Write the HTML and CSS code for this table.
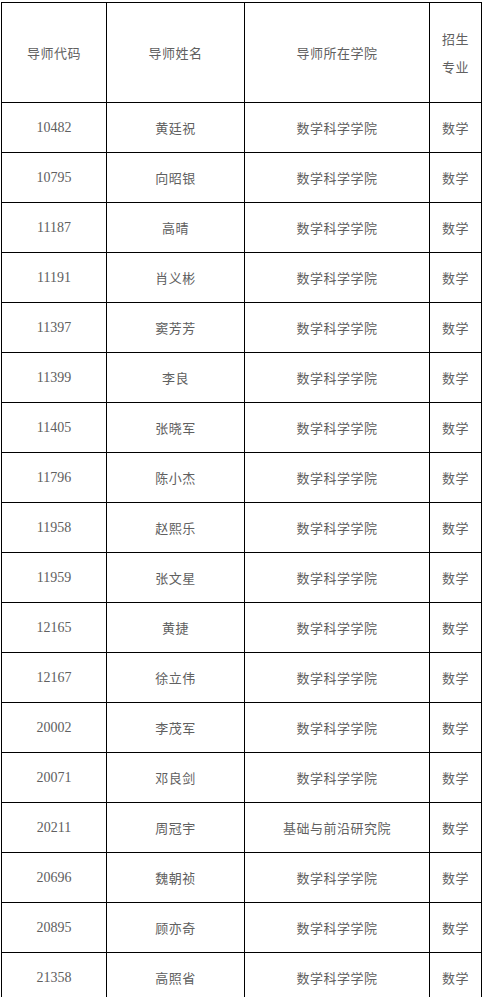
FILE: index.html
```html
<!DOCTYPE html>
<html lang="zh-CN">
<head>
<meta charset="utf-8">
<link rel="stylesheet" href="styles.css">
</head>
<body>
<table class="tbl">
  <colgroup>
    <col class="c1"><col class="c2"><col class="c3"><col class="c4">
  </colgroup>
  <thead>
    <tr class="head">
      <th>导师代码</th>
      <th>导师姓名</th>
      <th>导师所在学院</th>
      <th class="major">招生专业</th>
    </tr>
  </thead>
  <tbody>
    <tr><td class="num">10482</td><td>黄廷祝</td><td>数学科学学院</td><td>数学</td></tr>
    <tr><td class="num">10795</td><td>向昭银</td><td>数学科学学院</td><td>数学</td></tr>
    <tr><td class="num">11187</td><td>高晴</td><td>数学科学学院</td><td>数学</td></tr>
    <tr><td class="num">11191</td><td>肖义彬</td><td>数学科学学院</td><td>数学</td></tr>
    <tr><td class="num">11397</td><td>窦芳芳</td><td>数学科学学院</td><td>数学</td></tr>
    <tr><td class="num">11399</td><td>李良</td><td>数学科学学院</td><td>数学</td></tr>
    <tr><td class="num">11405</td><td>张晓军</td><td>数学科学学院</td><td>数学</td></tr>
    <tr><td class="num">11796</td><td>陈小杰</td><td>数学科学学院</td><td>数学</td></tr>
    <tr><td class="num">11958</td><td>赵熙乐</td><td>数学科学学院</td><td>数学</td></tr>
    <tr><td class="num">11959</td><td>张文星</td><td>数学科学学院</td><td>数学</td></tr>
    <tr><td class="num">12165</td><td>黄捷</td><td>数学科学学院</td><td>数学</td></tr>
    <tr><td class="num">12167</td><td>徐立伟</td><td>数学科学学院</td><td>数学</td></tr>
    <tr><td class="num">20002</td><td>李茂军</td><td>数学科学学院</td><td>数学</td></tr>
    <tr><td class="num">20071</td><td>邓良剑</td><td>数学科学学院</td><td>数学</td></tr>
    <tr><td class="num">20211</td><td>周冠宇</td><td>基础与前沿研究院</td><td>数学</td></tr>
    <tr><td class="num">20696</td><td>魏朝祯</td><td>数学科学学院</td><td>数学</td></tr>
    <tr><td class="num">20895</td><td>顾亦奇</td><td>数学科学学院</td><td>数学</td></tr>
    <tr><td class="num">21358</td><td>高照省</td><td>数学科学学院</td><td>数学</td></tr>
  </tbody>
</table>
</body>
</html>
```
FILE: styles.css
```css
html, body {
  margin: 0;
  padding: 0;
  background: #fff;
}
body {
  padding: 2px 0 0 1px;
  font-family: "Noto Sans CJK SC", "Liberation Sans", sans-serif;
  color: #606060;
}
.tbl {
  border-collapse: collapse;
  table-layout: fixed;
  width: 480px;
}
.c1 { width: 105px; }
.c2 { width: 138px; }
.c3 { width: 185px; }
.c4 { width: 52px; }
.tbl th,
.tbl td {
  border: 1px solid #000;
  padding: 0 6px;
  text-align: center;
  vertical-align: middle;
  font-size: 13px;
  font-weight: normal;
  line-height: 18px;
  letter-spacing: 0.5px;
}
.head th {
  height: 99px;
}
.head th.major {
  line-height: 28px;
  padding: 0 9px;
}
.tbl td {
  height: 49px;
}
.tbl td.num {
  font-family: "Liberation Serif", serif;
  font-size: 14px;
  letter-spacing: 0;
}
```
